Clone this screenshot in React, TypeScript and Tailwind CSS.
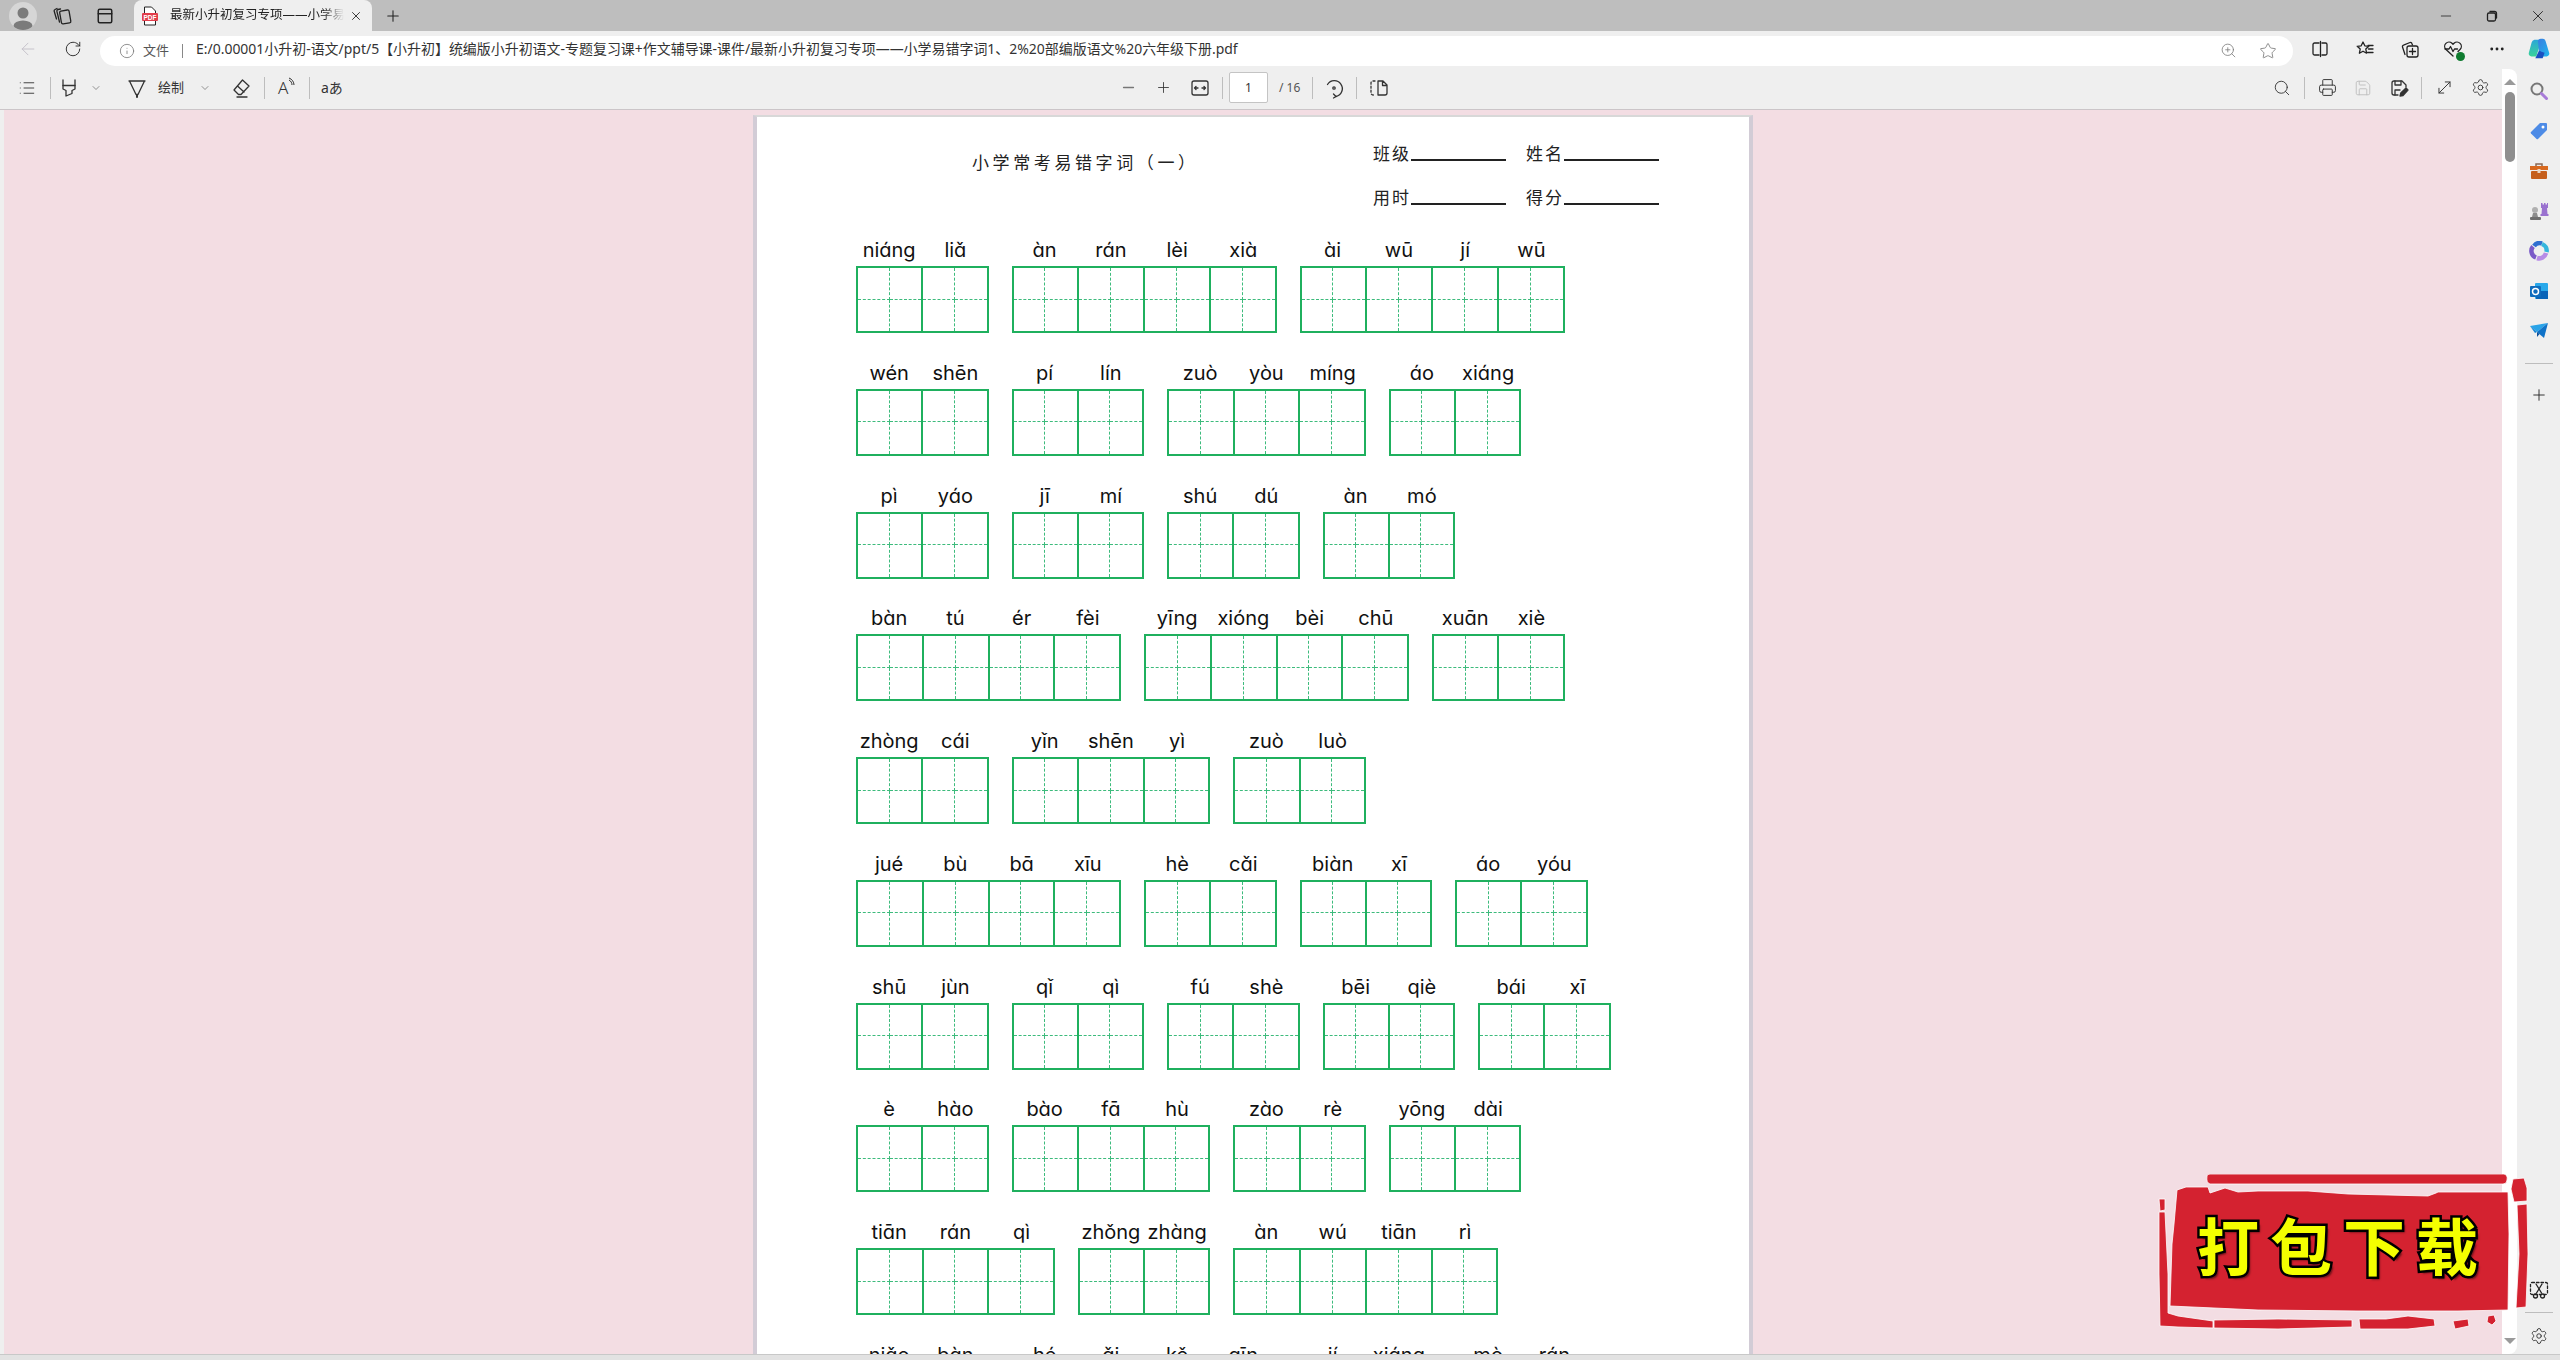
import type { ReactNode } from "react";
import { ArrowLeft, ChevronDown, Info, List, Minus, MoreHorizontal, MoveDiagonal, PanelTop, Plus, Printer, RotateCw, Save, Search, Settings, Star, X, ZoomIn } from "lucide-react";

type Group = string[];

const rows: Group[][] = [
    [["niáng", "liǎ"], ["àn", "rán", "lèi", "xià"], ["ài", "wū", "jí", "wū"]],
    [["wén", "shēn"], ["pí", "lín"], ["zuò", "yòu", "míng"], ["áo", "xiáng"]],
    [["pì", "yáo"], ["jī", "mí"], ["shú", "dú"], ["àn", "mó"]],
    [["bàn", "tú", "ér", "fèi"], ["yīng", "xióng", "bèi", "chū"], ["xuān", "xiè"]],
    [["zhòng", "cái"], ["yǐn", "shēn", "yì"], ["zuò", "luò"]],
    [["jué", "bù", "bā", "xīu"], ["hè", "cǎi"], ["biàn", "xī"], ["áo", "yóu"]],
    [["shū", "jùn"], ["qǐ", "qì"], ["fú", "shè"], ["bēi", "qiè"], ["bái", "xī"]],
    [["è", "hào"], ["bào", "fā", "hù"], ["zào", "rè"], ["yōng", "dài"]],
    [["tiān", "rán", "qì"], ["zhǒng", "zhàng"], ["àn", "wú", "tiān", "rì"]],
    [["niǎo", "bàn"], ["hé", "ǎi", "kě", "qīn"], ["jí", "xiáng"], ["mò", "rán"]],
];

const groupWidth: Record<number, string> = {
    2: "w-[132.5px]",
    3: "w-[198.75px]",
    4: "w-[265px]",
};

function Svg({ children, className = "" }: { children: ReactNode; className?: string }) {
    return (
        <svg width="24" height="24" viewBox="0 0 24 24" fill="none" stroke="currentColor" strokeWidth="1.3" strokeLinecap="round" strokeLinejoin="round" className={className}>
            {children}
        </svg>
    );
}

function Slot({ children, className = "" }: { children: ReactNode; className?: string }) {
    return <div className={`flex h-6 w-6 shrink-0 items-center justify-center ${className}`}>{children}</div>;
}

function Sep({ className = "" }: { className?: string }) {
    return <div className={`h-[22px] w-px shrink-0 bg-[#bdbdbd] ${className}`} />;
}

function Cell() {
    return (
        <div className="grid h-full flex-1 grid-cols-2 grid-rows-2">
            <div className="border-r border-b border-dashed border-[#3dbb7c]" />
            <div className="border-b border-dashed border-[#3dbb7c]" />
            <div className="border-r border-dashed border-[#3dbb7c]" />
            <div />
        </div>
    );
}

function WordGroup({ words }: { words: Group }) {
    return (
        <div className={groupWidth[words.length]}>
            <div className="mb-px flex h-[30px] items-center">
                {words.map((w, i) => (
                    <span key={i} className="w-[66.25px] shrink-0 text-center text-[20px] text-[#111] font-['Inter',sans-serif] [font-feature-settings:'cv11']">
                        {w}
                    </span>
                ))}
            </div>
            <div className="flex h-[67px] divide-x-2 divide-[#1fb05e] border-2 border-[#1fb05e]">
                {words.map((_, i) => (
                    <Cell key={i} />
                ))}
            </div>
        </div>
    );
}

function Field({ label }: { label: string }) {
    return (
        <div className="flex items-start">
            <span className="w-[38px] text-[17px] leading-6 tracking-[2px] whitespace-nowrap text-[#222]">{label}</span>
            <span className="mt-[17px] h-[2px] w-[95px] bg-[#222]" />
        </div>
    );
}

function PdfPage() {
    return (
        <div className="mt-[5px] h-[1300px] w-[1000px] shrink-0 border-x-4 border-t-2 border-x-[#d2ccd6] border-t-[#d8d8d8] bg-white pl-[99px]">
            <div className="flex h-[118px] items-start">
                <h1 className="mt-[33px] ml-[116px] w-[401px] text-[17px] leading-[26px] font-normal tracking-[3.6px] whitespace-nowrap text-[#222]">小学常考易错字词（一）</h1>
                <div className="mt-[25px] flex flex-col gap-5">
                    <div className="flex gap-5">
                        <Field label="班级" />
                        <Field label="姓名" />
                    </div>
                    <div className="flex gap-5">
                        <Field label="用时" />
                        <Field label="得分" />
                    </div>
                </div>
            </div>
            <div className="flex flex-col gap-[24.75px]">
                {rows.map((groups, r) => (
                    <div key={r} className="flex gap-[23px]">
                        {groups.map((words, g) => (
                            <WordGroup key={g} words={words} />
                        ))}
                    </div>
                ))}
            </div>
        </div>
    );
}

function TabBar() {
    return (
        <div className="flex h-[31px] items-center bg-[#bebebe] text-[#222]">
            <div className="ml-[9px] flex h-7 w-7 items-center justify-center overflow-hidden rounded-full bg-[#d6d6d6]">
                <svg width="28" height="28" viewBox="0 0 28 28" fill="#7b7b7b">
                    <circle cx="14" cy="11" r="5.5" />
                    <ellipse cx="14" cy="24" rx="9.5" ry="5.5" />
                </svg>
            </div>
            <Slot className="ml-[13px]">
                <Svg>
                    <rect x="10.5" y="6.5" width="9.5" height="13" rx="1.5" transform="rotate(-10 15 13)" />
                    <path d="M10.5 5 8 5.500a1.500 1.500 0 0 0-1.100 1.800L9.500 18" />
                    <path d="M7 4.500 5 5.500a1.500 1.500 0 0 0-.8 1.800L6.500 15" />
                </Svg>
            </Slot>
            <Slot className="ml-[19px]">
                <PanelTop size={18} strokeWidth={2} />
            </Slot>
            <div className="ml-[17px] flex h-[31px] w-[238px] items-center rounded-t-[8px] bg-[#efefef] pl-2">
                <svg width="16" height="20" viewBox="0 0 16 20" className="shrink-0">
                    <path d="M2.5 1h7l4 4v14h-11z" fill="#fff" stroke="#222" />
                    <rect x="0" y="7" width="16" height="8" rx="1" fill="#e23d4b" />
                    <text x="8" y="13.5" textAnchor="middle" fontSize="6.5" fontWeight="700" fill="#fff" fontFamily="Liberation Sans, sans-serif">PDF</text>
                </svg>
                <span className="ml-3 w-[174px] overflow-hidden text-[12.5px] whitespace-nowrap text-[#222] [mask-image:linear-gradient(to_right,#000_88%,transparent)]">最新小升初复习专项——小学易错字词1、2</span>
                <X size={14} strokeWidth={1.5} className="ml-[5px]" />
            </div>
            <Slot className="ml-[9px]">
                <Plus size={18} strokeWidth={1.4} />
            </Slot>
            <div className="mr-[10px] ml-auto flex gap-[22px]">
                <Slot>
                    <Minus size={16} strokeWidth={1.2} />
                </Slot>
                <Slot>
                    <Svg>
                        <rect x="7.5" y="9" width="8" height="8" rx="1.5" />
                        <path d="M10 7.5h4.5a2 2 0 0 1 2 2V14" />
                    </Svg>
                </Slot>
                <Slot>
                    <X size={18} strokeWidth={1.2} />
                </Slot>
            </div>
        </div>
    );
}

function AddressBar() {
    return (
        <div className="flex h-[35px] items-center bg-[#efefef] text-[#222]">
            <Slot className="ml-4 text-[#c3c0c8]">
                <ArrowLeft size={20} strokeWidth={1.1} />
            </Slot>
            <Slot className="ml-[21px]">
                <RotateCw size={18} strokeWidth={1.2} />
            </Slot>
            <div className="mt-1 ml-[15px] flex h-[30px] w-[2193px] items-center rounded-full bg-white pl-[15px]">
                <Slot className="text-[#777]">
                    <Info size={16} strokeWidth={1.2} />
                </Slot>
                <span className="ml-1 w-[28px] text-[13px] whitespace-nowrap text-[#555]">文件</span>
                <div className="ml-[11px] h-[14px] w-px bg-[#888]" />
                <span className="ml-[13px] -translate-y-px text-[13.96px] whitespace-nowrap text-[#333]">E:/0.00001小升初-语文/ppt/5【小升初】统编版小升初语文-专题复习课+作文辅导课-课件/最新小升初复习专项——小学易错字词1、2%20部编版语文%20六年级下册.pdf</span>
                <div className="mr-[13px] ml-auto flex gap-4 text-[#777]">
                    <Slot>
                        <ZoomIn size={17} strokeWidth={1.1} />
                    </Slot>
                    <Slot>
                        <Star size={18} strokeWidth={1.1} />
                    </Slot>
                </div>
            </div>
            <Slot className="ml-[15px]">
                <Svg>
                    <path d="M11 6H6.500A1.500 1.500 0 0 0 5 7.500v9A1.500 1.500 0 0 0 6.500 18H11M14 6h3.500A1.500 1.500 0 0 1 19 7.500v9a1.500 1.500 0 0 1-1.500 1.500H14M12.500 4.500v15" />
                </Svg>
            </Slot>
            <Slot className="ml-[21px]">
                <Svg>
                    <path d="m10 5 1.800 3.800 4 .5-3 2.800.8 4.100L10 14.200 6.400 16.200l.8-4.100-3-2.800 4-.5z" />
                    <path d="M15 8.500h5M15.500 12h4.500M14.500 15.500h5.500" />
                </Svg>
            </Slot>
            <Slot className="ml-[21px]">
                <Svg>
                    <path d="M7 17.500 4.500 10a1.500 1.500 0 0 1 1-1.900L12 5.500a1.500 1.500 0 0 1 1.900 1L14.500 8" />
                    <rect x="9" y="9" width="11" height="11" rx="2" />
                    <path d="M14.500 11.500v6M11.500 14.500h6" />
                </Svg>
            </Slot>
            <Slot className="ml-[19px]">
                <div className="relative">
                    <Svg>
                        <path d="M12 19 5 12.500a4.300 4.300 0 0 1 6-6.200l1 1 1-1a4.300 4.300 0 0 1 6 6.200l-2 2" />
                        <path d="M4 12h4l1.500-2.500 2.500 5 1.500-2.500h3" />
                    </Svg>
                    <span className="absolute right-0 bottom-0 h-[9px] w-[9px] rounded-full bg-[#0f7b2f]" />
                </div>
            </Slot>
            <Slot className="ml-5">
                <MoreHorizontal size={18} strokeWidth={1.8} />
            </Slot>
            <Slot className="ml-[18px]">
                <svg width="26" height="26" viewBox="0 0 26 26">
                    <defs>
                        <linearGradient id="cpA" x1="0" y1="0" x2="0" y2="1">
                            <stop offset="0" stopColor="#2aa7d8" />
                            <stop offset="1" stopColor="#3ad29a" />
                        </linearGradient>
                        <linearGradient id="cpB" x1="0" y1="0" x2="1" y2="1">
                            <stop offset="0" stopColor="#3a7de0" />
                            <stop offset="1" stopColor="#1fb6ee" />
                        </linearGradient>
                    </defs>
                    <path d="M8 3h8l-3 9-3 9H5a3 3 0 0 1-3-4l3-11a4 4 0 0 1 3-3z" fill="url(#cpA)" />
                    <path d="M12 5a3 3 0 0 1 3-3h2a3 3 0 0 1 3 2l4 13a3 3 0 0 1-3 4h-5a3 3 0 0 1-3-3z" fill="url(#cpB)" />
                    <path d="M9 23h8l2-6-6-2z" fill="#1a4fc0" />
                </svg>
            </Slot>
        </div>
    );
}

function PdfToolbar() {
    return (
        <div className="flex h-[44px] shrink-0 items-center border-b border-[#cbc5c8] bg-[#efefef] text-[#333]">
            <Slot className="ml-[15px]">
                <List size={18} strokeWidth={1.2} />
            </Slot>
            <Sep className="ml-[11px]" />
            <Slot className="ml-[6px]">
                <Svg>
                    <path d="M6 4v9l3 1.500V20l6-2.500v-3l3-1.500V4" />
                    <path d="M6 9.500h12" />
                </Svg>
            </Slot>
            <ChevronDown size={12} strokeWidth={1} className="ml-[9px]" />
            <Slot className="ml-[23px]">
                <Svg>
                    <path d="M4 5h16M4.500 5 11 18.500h2L19.500 5" />
                    <path d="M12 19v2" strokeWidth="2" />
                </Svg>
            </Slot>
            <span className="ml-[9px] w-[27px] text-[13px] whitespace-nowrap">绘制</span>
            <ChevronDown size={12} strokeWidth={1} className="ml-[14px]" />
            <Slot className="ml-[18px]">
                <Svg>
                    <path d="m13.500 4 6.500 6-8 8.500H9.500L5 14zM8.500 10l6.500 6M8 21h10" />
                </Svg>
            </Slot>
            <Sep className="ml-[11px]" />
            <div className="ml-[9px] flex h-6 w-6 items-center pl-1">
                <span className="text-[17px] leading-none font-light">A</span>
                <svg width="10" height="14" viewBox="0 0 10 14" fill="none" stroke="#333" className="-mt-2 -ml-px">
                    <path d="M2 3c2 1 3 3 3 5M2 1c3 1 5 4 5 7" />
                </svg>
            </div>
            <Sep className="ml-[11px]" />
            <span className="ml-[11px] w-[24px] text-[14px] whitespace-nowrap">aあ</span>

            <Slot className="ml-[771px] text-[#777]">
                <Minus size={17} strokeWidth={1.8} />
            </Slot>
            <Slot className="ml-[11px]">
                <Plus size={17} strokeWidth={1.2} />
            </Slot>
            <Slot className="ml-[13px]">
                <Svg>
                    <rect x="4" y="5" width="16" height="14" rx="2" />
                    <path d="M6.500 12H10M14 12h3.500M8 10.500 6.500 12 8 13.500M16 10.500l1.500 1.500-1.500 1.500" />
                </Svg>
            </Slot>
            <Sep className="ml-[10px]" />
            <div className="ml-[6px] flex h-[31px] w-[39px] items-center justify-center rounded-[2px] border border-[#c4c4c4] bg-white text-[12px]">1</div>
            <span className="ml-[11px] w-[21px] text-[12px] whitespace-nowrap text-[#555]">/ 16</span>
            <Sep className="ml-[12px]" />
            <Slot className="ml-[9px]">
                <Svg>
                    <path d="M5.500 8.500a8 8 0 1 1 8.500 12" />
                    <path d="m11.500 18 2.500 2.500-2.500 1.500" />
                    <circle cx="12" cy="12" r="1.200" />
                </Svg>
            </Slot>
            <Sep className="ml-[10px]" />
            <Slot className="ml-[10px]">
                <Svg>
                    <path d="M8 5H6a2 2 0 0 0-2 2v10a2 2 0 0 0 2 2h2" strokeDasharray="2 2" />
                    <path d="M11 5v14h7a2 2 0 0 0 2-2V9l-4-4zM15.500 5v4.500H20" />
                </Svg>
            </Slot>

            <div className="mr-[10px] ml-auto flex items-center">
                <Slot>
                    <Search size={18} strokeWidth={1.2} />
                </Slot>
                <Sep className="ml-[10px]" />
                <Slot className="ml-[10px]">
                    <Printer size={19} strokeWidth={1.2} />
                </Slot>
                <Slot className="ml-3 text-[#bdbdbd]">
                    <Save size={18} strokeWidth={1.2} />
                </Slot>
                <Slot className="ml-3">
                    <Svg>
                        <path d="M11 19H7a2 2 0 0 1-2-2V7a2 2 0 0 1 2-2h8l4 4v2" />
                        <path d="M8 5v4h6V5M8 19v-5h5" />
                        <path d="m13 20 .8-3L19 12l2 2-5 5.500z" fill="currentColor" />
                    </Svg>
                </Slot>
                <Sep className="ml-[10px]" />
                <Slot className="ml-[10px]">
                    <MoveDiagonal size={19} strokeWidth={1.2} />
                </Slot>
                <Slot className="ml-3">
                    <Settings size={19} strokeWidth={1.1} />
                </Slot>
            </div>
        </div>
    );
}

function ScrollTrack() {
    return (
        <div className="mt-[3px] flex w-[15px] shrink-0 flex-col items-center rounded-r-[8px] bg-white pt-[10px] pb-[10px]">
            <div className="h-0 w-0 border-x-[6px] border-b-[6px] border-x-transparent border-b-[#9a9a9a]" />
            <div className="mt-[7px] h-[70px] w-[10px] rounded-full bg-[#8f8f8f]" />
            <div className="mt-auto h-0 w-0 border-x-[6px] border-t-[6px] border-x-transparent border-t-[#9a9a9a]" />
        </div>
    );
}

function SideBar() {
    return (
        <div className="flex w-[43px] shrink-0 flex-col items-center bg-[#efefef] pt-[13px] pb-[6px] text-[#222]">
            <div className="flex flex-col gap-4">
                <Slot>
                    <svg width="20" height="20" viewBox="0 0 20 20" fill="none">
                        <circle cx="8" cy="8" r="5.500" stroke="#777" strokeWidth="2" />
                        <path d="m12.500 12.500 5 5" stroke="#a77bd8" strokeWidth="3" strokeLinecap="round" />
                    </svg>
                </Slot>
                <Slot>
                    <svg width="20" height="20" viewBox="0 0 20 20">
                        <path d="M11 2h6a1 1 0 0 1 1 1v6l-9 9a1 1 0 0 1-1.400 0L2 12.400A1 1 0 0 1 2 11z" fill="#4d8be6" />
                        <circle cx="14" cy="6" r="1.500" fill="#fff" />
                    </svg>
                </Slot>
                <Slot>
                    <svg width="20" height="20" viewBox="0 0 20 20">
                        <path d="M7 5V3h6v2" fill="none" stroke="#8a6a55" strokeWidth="1.500" />
                        <rect x="1" y="5" width="18" height="4" fill="#d8691f" />
                        <rect x="2" y="10" width="16" height="8" rx="1" fill="#c65f1c" />
                        <rect x="8.500" y="8" width="3" height="4" fill="#e9d8c8" />
                    </svg>
                </Slot>
                <Slot>
                    <svg width="20" height="20" viewBox="0 0 20 20">
                        <path d="M12 2h1.500v1.500H15V2h1.500v1.500H18V2h1v5h-1l.5 6h1v2H11.500v-2h1l.5-6h-1z" fill="#9a72cf" />
                        <circle cx="6" cy="9" r="3" fill="#b0b0b0" />
                        <path d="M4 12h4l1 4H3z" fill="#8d8d8d" />
                        <rect x="1" y="16" width="11" height="3" rx="1" fill="#6f6f6f" />
                    </svg>
                </Slot>
                <Slot>
                    <svg width="20" height="20" viewBox="0 0 20 20" fill="none" strokeWidth="4.500">
                        <path d="M5 5a7 7 0 0 1 8-2.500" stroke="#2f6fd0" />
                        <path d="M13 3a7 7 0 0 1 4.500 8" stroke="#35b5dc" />
                        <path d="M17 12a7 7 0 0 1-9 5" stroke="#b78ce6" />
                        <path d="M7 16.500a7 7 0 0 1-3-11" stroke="#7a5ac8" />
                    </svg>
                </Slot>
                <Slot>
                    <svg width="20" height="20" viewBox="0 0 20 20">
                        <rect x="6" y="2" width="13" height="16" rx="1" fill="#28a8ea" />
                        <path d="M7 10h12v8H7z" fill="#0a64b8" />
                        <rect x="1" y="5" width="11" height="11" rx="1" fill="#0f6cbd" />
                        <circle cx="6.500" cy="10.500" r="3" fill="none" stroke="#fff" strokeWidth="1.500" />
                    </svg>
                </Slot>
                <Slot>
                    <svg width="20" height="20" viewBox="0 0 20 20">
                        <path d="M1 5 19 2 8 11z" fill="#2aa4e8" />
                        <path d="M19 2 15 17 8 11z" fill="#0f72c8" />
                        <path d="M8 11v5l2.500-3z" fill="#0a4f9a" />
                        <path d="M1 5l7 6-2 1z" fill="#1784d4" />
                    </svg>
                </Slot>
            </div>
            <div className="mt-5 mb-[19px] h-px w-[28px] bg-[#bdbdbd]" />
            <Slot>
                <Plus size={18} strokeWidth={1.2} />
            </Slot>
            <Slot className="mt-auto">
                <Svg>
                    <rect x="3.500" y="4.500" width="17" height="12" rx="1.500" strokeDasharray="2.500 2" />
                    <path d="m9 6 5.500 9M15 6l-5.500 9" />
                    <circle cx="8.500" cy="18" r="2" />
                    <circle cx="15.500" cy="18" r="2" />
                </Svg>
            </Slot>
            <div className="mt-[10px] mb-[11px] h-px w-[28px] bg-[#bdbdbd]" />
            <Slot>
                <Settings size={18} strokeWidth={1.1} />
            </Slot>
        </div>
    );
}

function DownloadStamp() {
    return (
        <div className="absolute top-[1174px] left-[2158px] h-[157px] w-[372px]">
            <svg width="372" height="157" viewBox="0 0 372 157" className="absolute inset-0" fill="#d42230" stroke="#fff" strokeWidth="0.8">
                <path d="M49 2Q49 0 52 0H346Q350 1 349 6 349 10 345 10H52Q48 9 49 2Z" />
                <path d="M19 16 28 13H50L52 19 67 14 80 18 100 17H150L190 20 270 22 278 19 280 18H350L351 60 350 136 300 137 200 137 100 136 12 132 14 70 16 50Z" />
                <path d="M355 5 366 4 369 14 369 27 356 28 353 15Z" />
                <path d="M359 31 369 30 370 80 368 133 358 134 361 80Z" />
                <path d="M1 25 7 25 7 36 2 37Z" />
                <path d="M1 38 7 38 10 100 10 139 20 142 55 147 55 154 20 153 2 152 1 100Z" />
                <path d="M56 146 120 145 194 146 194 153 120 155 56 154Z" />
                <path d="M201 145 228 145 250 142 276 145 277 152 250 155 202 155Z" />
                <path d="M295 147 310 145 311 152 297 155Z" />
                <path d="M330 142 336 141 338 147 334 151 329 148Z" />
            </svg>
            <div className="absolute top-[32px] left-[39px] text-[62px] leading-[76px] font-bold tracking-[11px] whitespace-nowrap text-[#f4ff00] font-['Noto_Sans_CJK_SC',sans-serif] [-webkit-text-stroke:5px_#000] [paint-order:stroke_fill] [text-shadow:3px_3px_2px_rgba(0,0,0,0.5)]">
                打包下载
            </div>
        </div>
    );
}

export default function App() {
    return (
        <div className="relative flex h-[1360px] w-[2560px] flex-col overflow-hidden bg-[#efefef] font-['Noto_Sans','Noto_Sans_CJK_SC',sans-serif]">
            <TabBar />
            <AddressBar />
            <div className="flex h-[1288px] bg-[#efefef]">
                <div className="flex w-[2502px] shrink-0 flex-col">
                    <PdfToolbar />
                    <div className="flex min-h-0 flex-1 pl-1">
                        <div className="flex flex-1 justify-center overflow-hidden bg-[#f3dde3]">
                            <PdfPage />
                        </div>
                    </div>
                </div>
                <ScrollTrack />
                <SideBar />
            </div>
            <div className="h-[6px] border-t border-[#c8c8c8] bg-[#e2e2e2]" />
            <DownloadStamp />
        </div>
    );
}
